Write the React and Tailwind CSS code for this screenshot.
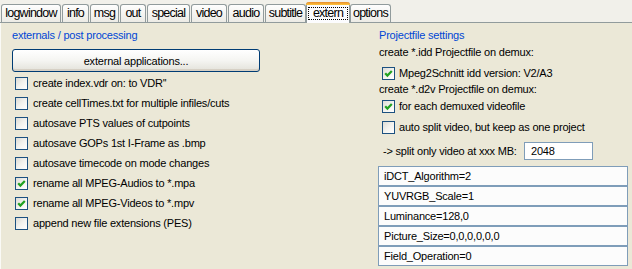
import React from 'react';

const tabs = [
  { label: 'logwindow', w: 'w-[60px]', ml: 'ml-[1px]' },
  { label: 'info', w: 'w-[27px]', ml: 'ml-[1px]' },
  { label: 'msg', w: 'w-[29px]', ml: 'ml-[1px]' },
  { label: 'out', w: 'w-[26px]', ml: 'ml-[1px]' },
  { label: 'special', w: 'w-[43px]', ml: 'ml-[1px]' },
  { label: 'video', w: 'w-[36px]', ml: 'ml-[1px]' },
  { label: 'audio', w: 'w-[36px]', ml: 'ml-[1px]' },
  { label: 'subtitle', w: 'w-[41px]', ml: 'ml-[1px]' },
  { label: 'extern', w: 'w-[44px]', ml: 'ml-0', active: true },
  { label: 'options', w: 'w-[41px]', ml: 'ml-0' },
];

const leftChecks = [
  { label: "create index.vdr on: to VDR''", on: false },
  { label: 'create cellTimes.txt for multiple infiles/cuts', on: false },
  { label: 'autosave PTS values of cutpoints', on: false },
  { label: 'autosave GOPs 1st I-Frame as .bmp', on: false },
  { label: 'autosave timecode on mode changes', on: false },
  { label: 'rename all MPEG-Audios to *.mpa', on: true },
  { label: 'rename all MPEG-Videos to *.mpv', on: true },
  { label: 'append new file extensions (PES)', on: false },
];

const params = [
  'iDCT_Algorithm=2',
  'YUVRGB_Scale=1',
  'Luminance=128,0',
  'Picture_Size=0,0,0,0,0,0',
  'Field_Operation=0',
];

const Box = ({ on }) => (
  <span className="w-[13px] h-[13px] shrink-0 border border-[#1c5180] bg-linear-to-br from-[#dcdcd6] via-[#f2f2ee] to-white flex items-center justify-center">
    {on && (
      <svg width="11" height="11" viewBox="0 0 11 11">
        <polyline points="2.2,5.2 4.4,7.6 8.8,3" fill="none" stroke="#21a121" strokeWidth="2.2" />
      </svg>
    )}
  </span>
);

const Check = ({ label, on, gap = 'gap-[5px]' }) => (
  <div className={`h-[20px] flex items-center ${gap}`}>
    <Box on={on} />
    <span className="whitespace-nowrap">{label}</span>
  </div>
);

const Tab = ({ label, w, ml, active }) =>
  active ? (
    <div className={`${w} ${ml} h-[21px] -mb-px relative z-10 flex flex-col bg-[#fcfcfe] border-x border-[#919b9c] rounded-t-[3px]`}>
      <div className="h-[3px] -mx-px rounded-t-[3px] bg-linear-to-b from-[#e68b2c] to-[#ffc73c]" />
      <div className="mx-[1px] mt-[2px] h-[13px] border border-dotted border-black flex items-center justify-center whitespace-nowrap">
        {label}
      </div>
    </div>
  ) : (
    <div className={`${w} ${ml} h-[18px] border border-b-0 border-[#919b9c] rounded-t-[3px] bg-linear-to-b from-[#fefefe] to-[#ecebe5] flex items-center justify-center whitespace-nowrap`}>
      {label}
    </div>
  );

export default function App() {
  return (
    <div className="w-[632px] h-[269px] overflow-hidden bg-[#f1f0ea] text-black font-['Liberation_Sans',Arial,sans-serif]">
      <div className="h-[23px] flex items-end border-b border-[#919b9c] text-[12.5px] tracking-[-0.75px] leading-none">
        {tabs.map((t) => (
          <Tab key={t.label} {...t} />
        ))}
      </div>

      <div className="h-[246px] flex bg-[#ebe8d7] border-l border-[#fafaf6] text-[11px] tracking-[-0.2px] leading-[14px]">
        <div className="w-[377px] flex flex-col">
          <div className="pt-[5px] pl-[11px] text-[#0046d5]">externals / post processing</div>
          <button className="mt-[7px] ml-[11px] w-[248px] h-[23px] rounded-[3px] border border-[#003c74] bg-linear-to-b from-white via-[#f5f5f2] to-[#e3e2da] shadow-[inset_0_-2px_0_#d6d0c5] text-[11px]">
            external applications...
          </button>
          <div className="mt-px pl-[14px] flex flex-col">
            {leftChecks.map((c) => (
              <Check key={c.label} {...c} />
            ))}
          </div>
        </div>

        <div className="flex flex-col">
          <div className="pt-[5px] pl-px text-[#0046d5]">Projectfile settings</div>
          <div className="h-[20px] flex items-center pl-px">create *.idd Projectfile on demux:</div>
          <div className="mt-px pl-[4px]">
            <Check label="Mpeg2Schnitt idd version: V2/A3" on gap="gap-[4px]" />
          </div>
          <div className="h-[12px] leading-[12px] pl-px">create *.d2v Projectfile on demux:</div>
          <div className="mt-px pl-[4px] flex flex-col gap-px">
            <Check label="for each demuxed videofile" on gap="gap-[4px]" />
            <Check label="auto split video, but keep as one project" gap="gap-[4px]" />
          </div>
          <div className="mt-[4px] h-[20px] flex items-center pl-[5px]">
            <span className="w-[141px] whitespace-nowrap">-&gt; split only video at xxx MB:</span>
            <div className="w-[69px] h-[18px] border border-[#7f9db9] bg-white pl-[6px] flex items-center">2048</div>
          </div>
          <div className="mt-[5px] w-[250px] flex flex-col">
            {params.map((p) => (
              <div key={p} className="h-[20px] border border-[#7f9db9] bg-[#fcfcfc] pl-[5px] flex items-center">
                {p}
              </div>
            ))}
          </div>
        </div>
      </div>
    </div>
  );
}
